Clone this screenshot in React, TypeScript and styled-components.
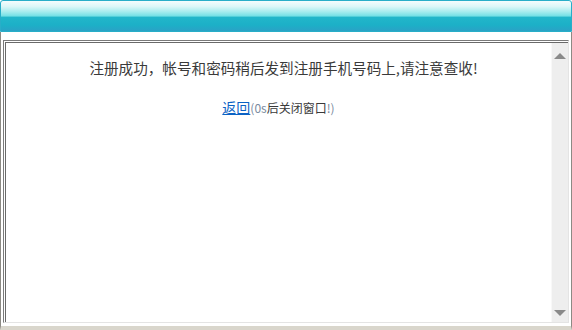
import React from "react";
import styled, { createGlobalStyle } from "styled-components";

const GlobalStyle = createGlobalStyle`
  html, body {
    margin: 0;
    padding: 0;
    background: #ffffff;
  }
  body {
    font-family: "Noto Sans CJK SC", "Liberation Sans", sans-serif;
  }
`;

const Window = styled.div`
  width: 572px;
  height: 330px;
  display: flex;
  flex-direction: column;
  box-sizing: border-box;
`;

const TitleBar = styled.div`
  height: 32px;
  box-sizing: border-box;
  border: 1px solid #28aec8;
  border-radius: 3px 3px 0 0;
  background: linear-gradient(
    to bottom,
    #f4fdfd 0%,
    #dcf7f8 18%,
    #a6ecee 36%,
    #74e0e5 50%,
    #22b6ca 54%,
    #1cb0c7 80%,
    #2aa2c6 100%
  );
`;

const Body = styled.div`
  flex: 1;
  display: flex;
  box-sizing: border-box;
  padding: 8px 2px 3px 2px;
  border-left: 1px solid #8c8a84;
  border-right: 1px solid #8c8a84;
  border-bottom: 4px solid #d9d6cc;
  background: #ffffff;
`;

const Frame = styled.div`
  flex: 1;
  display: flex;
  box-sizing: border-box;
  border-top: 1px solid #7a7a7a;
  border-left: 1px solid #7a7a7a;
  border-right: 1px solid #e4e4e4;
  border-bottom: 1px solid #e4e4e4;
  box-shadow: inset 1px 1px 0 #ffffff, inset 2px 2px 0 #6a6a6a;
  padding: 2px 0 0 2px;
`;

const Content = styled.div`
  flex: 1;
  padding-top: 14px;
  text-align: center;
  color: #3a3a3a;
`;

const Message = styled.p`
  margin: 0;
  padding-left: 10px;
  font-size: 14.6px;
  line-height: 22px;
`;

const ReturnLine = styled.p`
  margin: 18px 0 0;
  font-size: 12px;
  line-height: 20px;
  color: #3a3a3a;
`;

const BackLink = styled.a`
  font-size: 14px;
  color: #0b62c4;
  text-decoration: underline;
  cursor: pointer;
`;

const Countdown = styled.span`
  color: #7a8aa0;
`;

const Scrollbar = styled.div`
  width: 17px;
  display: flex;
  flex-direction: column;
  justify-content: space-between;
  align-items: center;
  background: #eeeeee;
  border-left: 1px solid #f8f8f8;
  padding: 10px 0 6px;
  box-sizing: border-box;
`;

const Arrow = styled.div<{ $down?: boolean }>`
  width: 0;
  height: 0;
  border-left: 6px solid transparent;
  border-right: 6px solid transparent;
  ${(p) =>
    p.$down
      ? "border-top: 6px solid #8a8a8a;"
      : "border-bottom: 6px solid #8a8a8a;"}
`;

export default function App() {
  return (
    <Window>
      <GlobalStyle />
      <TitleBar />
      <Body>
        <Frame>
          <Content>
            <Message>注册成功，帐号和密码稍后发到注册手机号码上,请注意查收!</Message>
            <ReturnLine>
              <BackLink>返回</BackLink>
              <Countdown>(0s</Countdown>后关闭窗口<Countdown>!)</Countdown>
            </ReturnLine>
          </Content>
          <Scrollbar>
            <Arrow />
            <Arrow $down />
          </Scrollbar>
        </Frame>
      </Body>
    </Window>
  );
}
